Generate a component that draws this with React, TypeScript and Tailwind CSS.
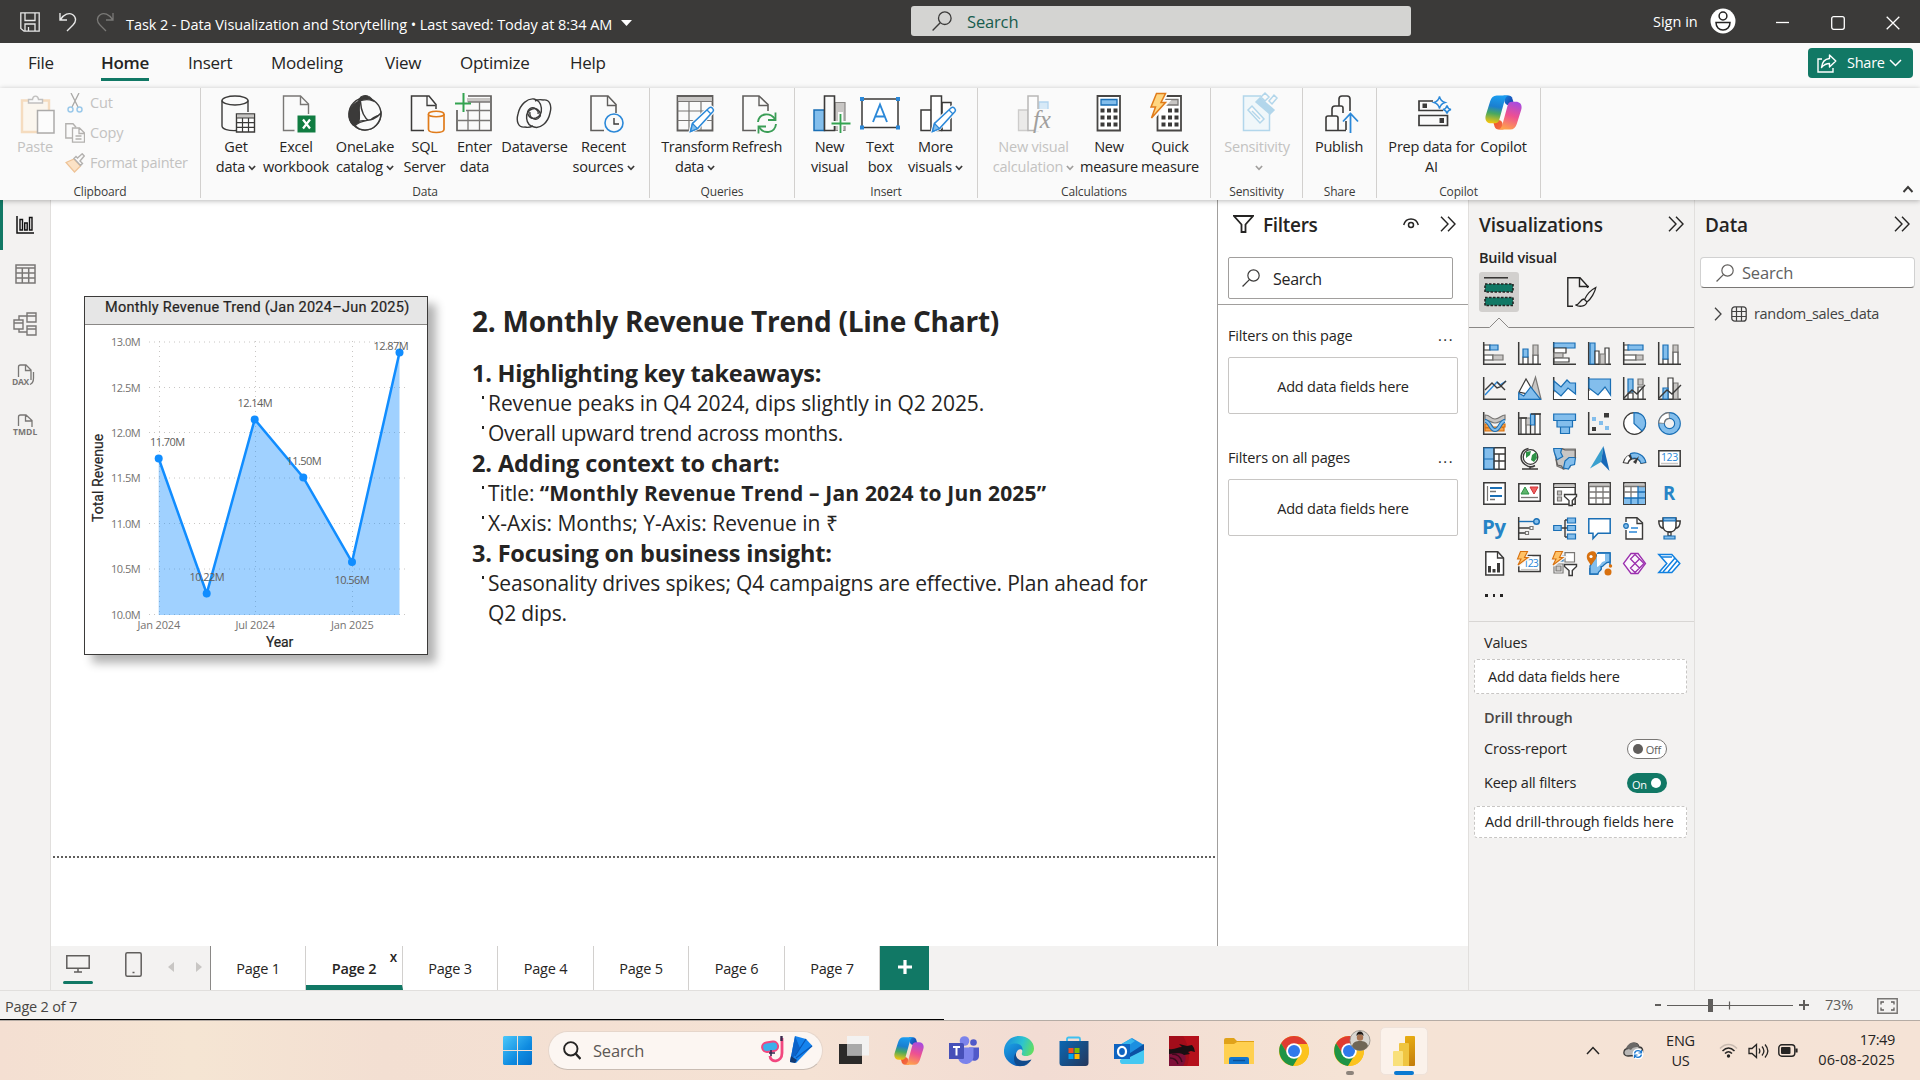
import type { ReactNode } from 'react';

const K = '#3b3a39';
const GF = '#c8c6c4';
const GS = '#797775';
const BF = '#83beec';
const BS = '#1a6fb5';

function Svg({ w, h, children, className = '' }: { w: number; h: number; children: ReactNode; className?: string }) {
  return (
    <svg width={w} height={h} viewBox={`0 0 ${w} ${h}`} fill="none" className={`shrink-0 ${className}`}>
      {children}
    </svg>
  );
}

/* ---------- shared glyphs ---------- */

function Down({ color = K }: { color?: string }) {
  return (
    <Svg w={8} h={6} className="ml-[3px] inline-block align-[1px]">
      <path d="M.9 1 4 4.3 7.1 1" stroke={color} strokeWidth="1.7" />
    </Svg>
  );
}

function DoubleChevron() {
  return (
    <Svg w={16} h={16}>
      <path d="M1 .8 8 8 1 15.2M8 .8 15 8 8 15.2" stroke="#252423" strokeWidth="1.4" />
    </Svg>
  );
}

function Magnifier({ color = K, size = 20 }: { color?: string; size?: number }) {
  return (
    <svg width={size} height={size} viewBox="0 0 20 20" fill="none" className="shrink-0">
      <circle cx="12.8" cy="7.2" r="6.3" stroke={color} strokeWidth="1.3" />
      <path d="M8.2 11.8.6 19.4" stroke={color} strokeWidth="1.4" />
    </svg>
  );
}

function CopilotLogo({ size }: { size: number }) {
  return (
    <svg width={size} height={size} viewBox="0 0 24 24" fill="none" className="shrink-0">
      <defs>
        <linearGradient id="cpA" x1="8" y1="1" x2="5" y2="19" gradientUnits="userSpaceOnUse">
          <stop stopColor="#1a9df0" />
          <stop offset=".4" stopColor="#1b7fd0" />
          <stop offset=".65" stopColor="#48a860" />
          <stop offset="1" stopColor="#f6c50e" />
        </linearGradient>
        <linearGradient id="cpB" x1="20" y1="5" x2="14" y2="23" gradientUnits="userSpaceOnUse">
          <stop stopColor="#a54be2" />
          <stop offset=".5" stopColor="#ee5092" />
          <stop offset="1" stopColor="#ffa24c" />
        </linearGradient>
        <linearGradient id="cpC" x1="12" y1="1" x2="19" y2="6" gradientUnits="userSpaceOnUse">
          <stop stopColor="#1688e0" />
          <stop offset="1" stopColor="#1839a8" />
        </linearGradient>
        <linearGradient id="cpD" x1="6" y1="18" x2="12" y2="23" gradientUnits="userSpaceOnUse">
          <stop stopColor="#f0542c" />
          <stop offset="1" stopColor="#f4744a" />
        </linearGradient>
      </defs>
      <path d="M12 1h3.200c1.300 0 2.200.8 2.600 2l1.200 4.200h-3.500c-1.500 0-2.400-.7-2.800-2z" fill="url(#cpC)" />
      <path d="M12 23H8.800c-1.300 0-2.200-.8-2.600-2L5 16.800h3.500c1.500 0 2.400.7 2.800 2z" fill="url(#cpD)" />
      <path d="M15.600 1H7.600C5.400 1 4.100 2.400 3.400 4.600L.6 13.400C-.4 16.600.9 19 4 19h2.600c1.300 0 2.200-.8 2.600-2L12.600 4.600C13.200 2.400 14 1.200 15.600 1Z" fill="url(#cpA)" />
      <path d="M8.400 23h8c2.200 0 3.500-1.400 4.200-3.600l2.800-8.800C24.400 7.400 23.100 5 20 5h-2.600c-1.300 0-2.200.8-2.600 2l-3.400 12.400c-.6 2.200-1.400 3.400-3 3.600Z" fill="url(#cpB)" />
    </svg>
  );
}

/* ---------- ribbon icons, 40 x 40 ---------- */

function R({ children, dx = 0 }: { children: ReactNode; dx?: number }) {
  return (
    <svg width="40" height="40" viewBox={`${-dx} 0 40 40`} fill="none" className="shrink-0 overflow-visible">
      {children}
    </svg>
  );
}

const pencil = (
  <g>
    <path d="M11 38 13.500 29 30 13.500C32 11.500 36 15 34.500 17.500L18.500 34.500Z" fill="#fafafa" stroke="#fafafa" strokeWidth="3" />
    <path d="M11.500 37.500 13.500 29.500 30 14C32.500 12 35.500 15.500 34 17.500L18.500 34.500Z" fill="#fff" stroke="#2b88d8" strokeWidth="1.500" />
    <path d="M11.500 37.500 13.500 29.500 18.500 34.500Z" fill={BF} stroke="#2b88d8" strokeWidth="1.200" />
    <path d="M28 16l4 4" stroke="#2b88d8" strokeWidth="1.200" />
  </g>
);

const icons: Record<string, ReactNode> = {
  paste: (
    <R dx={1}>
      <g opacity=".5">
        <path d="M6 6.500h27V38H6z" fill="#fdf3e3" stroke="#f1bf86" strokeWidth="2.400" />
        <path d="M12.500 9V5.500h4C17 1 22 1 22.500 5.500h4V9Z" fill="#fafafa" stroke="#8a8886" strokeWidth="1.400" />
        <path d="M21.500 16.500h16.500V39H21.500z" fill="#fff" stroke="#605e5c" strokeWidth="1.500" />
      </g>
    </R>
  ),
  get: (
    <R dx={3.5}>
      <path d="M2.500 6.500V32C2.500 35 9 37 17 36.500M28.500 6.500V18" stroke={K} strokeWidth="1.400" />
      <ellipse cx="15.500" cy="6.500" rx="13" ry="4.500" fill="#fafafa" stroke={K} strokeWidth="1.400" />
      <path d="M17 20h18v18H17z" fill="#fff" stroke={K} strokeWidth="1.400" />
      <path d="M17.500 20.500h17v3.500h-17z" fill="#c8c6c4" />
      <path d="M17 24h18M17 28.700h18M17 33.300h18M23 24v14M29 24v14" stroke={K} strokeWidth="1.200" />
    </R>
  ),
  excel: (
    <R dx={3.5}>
      <path d="M15 36.500H4V2H21L29 10V20" stroke="#797775" strokeWidth="1.400" />
      <path d="M21 2v8.500h8" stroke="#797775" strokeWidth="1.400" />
      <path d="M18 21.500h18V38.500H18z" fill="#107c41" />
      <path d="M23.500 25.500 30.500 34.500M30.500 25.500 23.500 34.500" stroke="#fff" strokeWidth="2.200" />
    </R>
  ),
  onelake: (
    <R>
      <circle cx="20" cy="20" r="16" fill="#fafafa" stroke={K} strokeWidth="1.400" />
      <path d="M13.500 7.500C14.500 3 18 1.500 20.500 1.500S26.500 3.500 28 7C23 4.500 18 5.500 13.500 7.500Z" fill={K} stroke={K} strokeWidth="1.200" />
      <path d="M12 8C2 14 2 25 8 31C13 33 15 27 14.500 20C14 15 14 11 15.500 7Z" fill={K} stroke={K} strokeWidth="1.200" />
      <path d="M15.500 8C16 16 19 24 25 28M25 28C20 26 12 26 8 31M25 28C26 24 31 22 36 21" stroke={K} strokeWidth="1.500" />
      <path d="M10 31.500C15 26.500 22 27 28 25 32 23 34.500 21 36 19 36 28 29 36 20 36 15 36 12 34 10 31.500Z" fill="#fafafa" stroke={K} strokeWidth="1.400" />
    </R>
  ),
  sql: (
    <R dx={1}>
      <path d="M18 36.500H5.500V2H23L30 10.500V15" stroke={K} strokeWidth="1.500" />
      <path d="M21 2v9.500h8.500" stroke={K} strokeWidth="1.300" />
      <path d="M22.500 20V35.500C23 39.500 37.500 39.500 38 35.500V20" fill="#fafafa" stroke="#e07b1a" strokeWidth="1.700" />
      <ellipse cx="30.200" cy="20" rx="7.800" ry="2.800" fill="#fafafa" stroke="#e07b1a" strokeWidth="1.500" />
    </R>
  ),
  enter: (
    <R dx={-1}>
      <path d="M3 16V36.500H37V2H14" stroke="#605e5c" strokeWidth="1.700" />
      <path d="M13 4h23v4H13z" fill="#c8c6c4" />
      <path d="M3 26.500H37M12 16.500H37M14 8H37M14 16v20M25.500 8v28" stroke="#797775" strokeWidth="1.300" />
      <path d="M1 9.500H17M9.500-1V18" stroke="#33a350" strokeWidth="2" />
    </R>
  ),
  dataverse: (
    <R dx={-1}>
      <path d="M11 33C4 34 2 27 4 20C6 10 14 4 20 5C29 7 30 21 22 24C15 26 11 18 16 14.500C20 12 25 16 24 20" stroke={K} strokeWidth="1.400" />
      <path d="M29 6C36 5 38 12 36 19C34 29 26 35 20 33C11 31 10 18 18 15C25 13 29 21 24 24.500C20 27 15 23 16 18" stroke={K} strokeWidth="1.400" />
      <path d="M11 33C15 34 17 33 19 32M29 6C25 5 23 6 21 7" stroke={K} strokeWidth="1.400" />
    </R>
  ),
  recent: (
    <R dx={2}>
      <path d="M18 36.500H5V2H22L30 10.500V19" stroke="#605e5c" strokeWidth="1.600" />
      <path d="M21.500 2v9.500h8.500" stroke="#605e5c" strokeWidth="1.400" />
      <circle cx="28" cy="29" r="9" fill="#fafafa" stroke="#2b88d8" strokeWidth="1.600" />
      <path d="M28 24v6h5" stroke={K} strokeWidth="1.400" />
    </R>
  ),
  transform: (
    <R>
      <path d="M2.500 2h35v34.500h-35z" fill="#fafafa" stroke="#605e5c" strokeWidth="1.800" />
      <path d="M3.500 3h33v4h-33z" fill="#c8c6c4" />
      <path d="M2.500 7.500h35M2.500 17h35M2.500 26.500h35M14 8v28M26 8v28" stroke="#797775" strokeWidth="1.200" />
      <g transform="translate(4 0)">{pencil}</g>
    </R>
  ),
  refresh: (
    <R dx={2}>
      <path d="M17 36.500H4V2H20L29 10.500V17" stroke="#605e5c" strokeWidth="1.600" />
      <path d="M20 2v9.500h9" stroke="#605e5c" strokeWidth="1.400" />
      <path d="M19 28C20 19 31 18 36 25M37 30C36 39 25 41 20 33" stroke="#3a9d56" strokeWidth="1.900" />
      <path d="M36.500 18.500V26H29M19.500 39.500V32.500H27" stroke="#3a9d56" strokeWidth="1.800" />
    </R>
  ),
  newvisual: (
    <R dx={1}>
      <path d="M3 16h10.500v20.500H3z" fill={BF} stroke={BS} strokeWidth="1.500" />
      <path d="M24 8.500h10V36.500H24z" fill="#c8c6c4" stroke="#8a8886" strokeWidth="1.200" />
      <path d="M13.500 2h10v34.500h-10z" fill="#fafafa" stroke={K} strokeWidth="1.600" />
      <path d="M29.500 18v20M20 29.500h19" stroke="#fafafa" strokeWidth="5" />
      <path d="M29.500 20v19M20.500 29.500h19" stroke="#33a350" strokeWidth="1.800" />
    </R>
  ),
  textbox: (
    <R>
      <path d="M2 5h36v28.500H2z" fill="#fff" stroke={K} strokeWidth="1.500" />
      <path d="M0 3h4v4H0zM36 3h4v4h-4zM0 31.500h4v4H0zM36 31.500h4v4h-4z" fill="#2b88d8" />
      <path d="M13 28 20 10.500 27 28M15.500 22.500h9" stroke="#2b88d8" strokeWidth="1.900" />
    </R>
  ),
  morevisual: (
    <R dx={1}>
      <path d="M4 16h10.500v20.500H4zM25 8.500h9V36.500h-9z" fill="#fff" stroke={K} strokeWidth="1.500" />
      <path d="M14 2h10.500v34.500H14z" fill="#fff" stroke={K} strokeWidth="1.500" />
      <g transform="translate(4 0)">{pencil}</g>
    </R>
  ),
  newcalc: (
    <R dx={1}>
      <g opacity=".5">
        <path d="M3.500 16H13v20.500H3.500z" fill="#dddbd9" stroke="#a19f9d" strokeWidth="1.300" />
        <path d="M24 8h9v9h-9z" fill="#b5d9f5" stroke="#6fb1e6" strokeWidth="1.300" />
        <path d="M13 2h10v34.500H13z" fill="#fff" stroke="#797775" strokeWidth="1.500" />
        <path d="M20 15h14v22H20z" fill="#fafafa" />
      </g>
      <text x="18" y="34" fontFamily="Liberation Serif, serif" fontStyle="italic" fontSize="25" fill="#a19f9d">fx</text>
    </R>
  ),
  calc: (
    <R dx={0}>
      <path d="M8.500 2h22.500v34.500H8.500z" fill="#fff" stroke="#484644" strokeWidth="1.800" />
      <path d="M12 5.500h16V11H12z" fill={BF} stroke={BS} strokeWidth="1.300" />
      <path d="M11.500 14.500h4v4h-4zM18 14.500h4v4h-4zM24.500 14.500h4v4h-4zM11.500 21.500h4v4h-4zM18 21.500h4v4h-4zM24.500 21.500h4v4h-4zM11.500 28.500h4v4h-4zM18 28.500h4v4h-4zM24.500 28.500h4v4h-4z" fill={K} />
    </R>
  ),
  quick: (
    <R>
      <path d="M7.500 2h23.500v34.500H7.500z" fill="#fff" stroke="#484644" strokeWidth="1.800" />
      <path d="M14 5.500h14V11H14z" fill="#c8c6c4" stroke="#797775" strokeWidth="1.300" />
      <path d="M11.500 21.500h4v4h-4zM18 14.500h4v4h-4zM24.500 14.500h4v4h-4zM18 21.500h4v4h-4zM24.500 21.500h4v4h-4zM11.500 28.500h4v4h-4zM18 28.500h4v4h-4zM24.500 28.500h4v4h-4z" fill={K} />
      <path d="M6-1h10l-4 9h5L2 25l4-12H.5Z" fill="#ffd27d" stroke="#fafafa" strokeWidth="4" />
      <path d="M6.500-.5h9L11 8.500h4.500L1.500 24 5.500 13H1Z" fill="#ffd680" stroke="#e07b1a" strokeWidth="1.500" />
    </R>
  ),
  sensitivity: (
    <R dx={2}>
      <g opacity=".75" stroke="#9bcbe6" strokeWidth="1.500">
        <path d="M22 2H4.500v34.500h26V18" fill="#edf6fb" />
        <path d="M9 16l4-4 12 13-4 4z" fill="#fafafa" />
        <path d="M13 17l8 8" />
        <path d="M17 8l4-4 14 12-4 4z" fill="#9bcbe6" />
        <path d="M22 3l4-4 4 4-4 4zM30 7l5-6 3 3-5 6z" fill="#fafafa" />
      </g>
    </R>
  ),
  publish: (
    <R dx={1}>
      <path d="M19 36.500H6V24a2 2 0 0 1 2-2h8a2 2 0 0 1 2 2V36M12 21.500V15a3 3 0 0 1 3-3h6a2 2 0 0 1 2 2v5M19 11.500V5a3 3 0 0 1 3-3h5a3 3 0 0 1 3 3v12M18 36.500h8M26 36V27" stroke={K} strokeWidth="1.600" />
      <path d="M30.500 39V20M23 27.500l7.500-8 7.500 8" stroke="#2b88d8" strokeWidth="1.800" />
    </R>
  ),
  prep: (
    <R dx={1}>
      <path d="M20 7H6v9.500h24M6 21.500h28.500V31.500H6z" stroke={K} strokeWidth="1.700" />
      <path d="M9.500 9.500h4.500v4.500H9.500zM26.500 24h4.500v5h-4.500z" fill={K} />
      <path d="M26.500 2.500C27.300 6 28.500 7.500 32 8.500 28.500 9.500 27.300 11 26.500 14.500 25.700 11 24.500 9.500 21 8.500 24.500 7.500 25.700 6 26.500 2.500ZM34 11.500C34.500 14 35.500 15 38 15.500 35.500 16 34.500 17 34 19.500 33.500 17 32.500 16 30 15.500 32.500 15 33.500 14 34 11.500Z" stroke="#2b88d8" strokeWidth="1.400" />
    </R>
  ),
  copilot: (
    <div className="flex h-10 w-10 items-center justify-center pb-[3px]">
      <CopilotLogo size={37} />
    </div>
  ),
};

function RBtn({ icon, w, a, b, arrow, off }: { icon: string; w: string; a: string; b?: string; arrow?: boolean; off?: boolean }) {
  return (
    <div className={`flex shrink-0 flex-col items-center ${w} ${off ? 'text-[#c3c2c1]' : 'text-[#252423]'}`}>
      {icons[icon]}
      <div className="mt-[3px] text-center leading-5 whitespace-nowrap">
        {a}
        <br />
        {b}
        {arrow && <Down color={off ? '#a19f9d' : K} />}
      </div>
    </div>
  );
}

function Group({ w, label, pl = '', children }: { w: string; label: string; pl?: string; children: ReactNode }) {
  return (
    <div className={`flex h-[110px] shrink-0 flex-col border-r border-[#d2d0ce] ${w}`}>
      <div className={`flex h-[95px] shrink-0 pt-[6px] ${pl}`}>{children}</div>
      <div className="h-[15px] text-center text-[12px] leading-[17px] tracking-[-0.15px] text-[#3b3a39]">{label}</div>
    </div>
  );
}

function TitleBar() {
  return (
    <div className="flex h-[43px] shrink-0 items-start bg-[#3b3a39] text-white">
      <Svg w={20} h={20} className="mt-[12px] ml-[20px]">
        <path d="M.8.8h18.400v18.400H4L.8 16.500zM5 1v7.500h10V1M5 19v-7h10v7M8.500 19v-4" stroke="#e8e8e8" strokeWidth="1.300" />
      </Svg>
      <Svg w={18} h={20} className="mt-[12px] ml-[19px]">
        <path d="M1 1v7h7M1.500 7.500C5 2 10 .5 13.500 2.500 18 5.500 17 10 14 13L8 19" stroke="#e8e8e8" strokeWidth="1.400" />
      </Svg>
      <Svg w={18} h={20} className="mt-[12px] ml-[19px]">
        <path d="M17 1v7h-7M16.500 7.500C13 2 8 .5 4.500 2.500 0 5.500 1 10 4 13L10 19" stroke="#7a7977" strokeWidth="1.300" />
      </Svg>
      <span className="mt-[15px] ml-[12px] w-[495px] leading-5 tracking-[-0.08px] whitespace-nowrap">
        Task 2 - Data Visualization and Storytelling • Last saved: Today at 8:34 AM
      </span>
      <Svg w={11} h={6} className="mt-[20px]">
        <path d="M0 0h11L5.500 6z" fill="#fff" />
      </Svg>
      <div className="mt-[6px] ml-[279px] flex h-[30px] w-[500px] items-center rounded-[3px] bg-[#d4d4d2] pl-[21px]">
        <Magnifier />
        <span className="mt-[2px] ml-[15px] text-[16.500px] tracking-[-0.15px] text-[#185c4d]">Search</span>
      </div>
      <span className="mt-[12px] ml-[242px] leading-5 tracking-normal">Sign in</span>
      <Svg w={26} h={26} className="mt-[8px] ml-[12px]">
        <circle cx="13" cy="13" r="12.500" fill="#fff" />
        <circle cx="13" cy="8" r="3.900" stroke="#252423" strokeWidth="1.500" />
        <path d="M6 14.500h14c0 4.500-3 7.500-7 7.500s-7-3-7-7.500Z" stroke="#252423" strokeWidth="1.500" />
      </Svg>
      <Svg w={13} h={14} className="mt-[15px] ml-[40px]">
        <path d="M0 7.500h13" stroke="#fff" strokeWidth="1.300" />
      </Svg>
      <Svg w={14} h={14} className="mt-[16px] ml-[42px]">
        <rect x=".7" y=".7" width="12.600" height="12.600" rx="2" stroke="#fff" strokeWidth="1.300" />
      </Svg>
      <Svg w={14} h={14} className="mt-[16px] ml-[41px]">
        <path d="M.7.7l12.600 12.600M13.300.7.7 13.300" stroke="#fff" strokeWidth="1.300" />
      </Svg>
    </div>
  );
}

function MenuBar() {
  const items: [string, string][] = [
    ['File', 'w-[73px]'],
    ['Home', 'w-[87px]'],
    ['Insert', 'w-[83px]'],
    ['Modeling', 'w-[114px]'],
    ['View', 'w-[75px]'],
    ['Optimize', 'w-[110px]'],
    ['Help', 'w-[60px]'],
  ];
  return (
    <div className="flex h-[45px] shrink-0 justify-between bg-[#fafafa] pl-[28px] text-[17px] tracking-[-0.25px] text-[#252423]">
      <div className="flex">
        {items.map(([t, w]) => (
          <div key={t} className={w}>
            <span
              className={`inline-block h-[38px] pt-[8px] leading-6 ${t === 'Home' ? 'border-b-3 border-[#117865] font-semibold tracking-[-0.3px]' : ''}`}
            >
              {t}
            </span>
          </div>
        ))}
      </div>
      <div className="mt-[5px] mr-[7px] flex h-[30px] w-[105px] items-center rounded-[4px] bg-[#117865] pl-[9px] text-[14.500px] text-white">
        <Svg w={20} h={19}>
          <path d="M5 5H1v13h15v-4" stroke="#fff" strokeWidth="1.400" />
          <path d="M12.500 1 18.800 7l-6.300 6V9.500C9 9.500 7 10.500 4.500 13.500 5 8.500 7.500 5 12.500 4.500Z" stroke="#fff" strokeWidth="1.400" strokeLinejoin="round" />
        </Svg>
        <span className="ml-[10px]">Share</span>
        <Svg w={13} h={8} className="ml-[4px]">
          <path d="M1 1l5.500 5.500L12 1" stroke="#fff" strokeWidth="1.500" />
        </Svg>
      </div>
    </div>
  );
}

function Ribbon() {
  return (
    <div className="relative z-10 flex h-[112px] shrink-0 bg-[#fafafa] shadow-[0_1px_5px_rgba(0,0,0,0.28)]">
      <Group w="w-[201px]" label="Clipboard" pl="pl-[14px]">
        <RBtn icon="paste" w="w-[42px]" a="Paste" off />
        <div className="mt-[-6px] ml-[9px] flex flex-col text-[#c3c2c1]">
          <div className="flex h-[30px] items-center">
            <Svg w={20} h={20}>
              <path d="M6 0l7 14M14 0 7 14" stroke="#a9a8a6" strokeWidth="1.300" />
              <circle cx="5.500" cy="16.500" r="2.500" stroke="#9bc9ea" strokeWidth="1.500" />
              <circle cx="14.500" cy="16.500" r="2.500" stroke="#9bc9ea" strokeWidth="1.500" />
            </Svg>
            <span className="ml-[5px]">Cut</span>
          </div>
          <div className="flex h-[30px] items-center">
            <Svg w={20} h={20}>
              <path d="M7 15H.8V.8H8l3 3.500" stroke="#b3b1af" strokeWidth="1.400" />
              <path d="M7.500 5h7l5 5v9.200h-12zM14 5v5.500h5.500M10.500 13h6M10.500 16h6" stroke="#b3b1af" strokeWidth="1.300" />
            </Svg>
            <span className="ml-[5px]">Copy</span>
          </div>
          <div className="flex h-[30px] items-center">
            <Svg w={20} h={20}>
              <path d="M1 9.500 9 6l6.500 7L9.500 19Z" fill="#fbe2c6" stroke="#eec397" strokeWidth="1.300" />
              <path d="M9 5.500l6.500 7 2-2L15 8l4.200-5-2-2.200L12.500 5 11 3.500Z" fill="#fafafa" stroke="#b3b1af" strokeWidth="1.400" />
            </Svg>
            <span className="ml-[5px] tracking-[-0.25px]">Format painter</span>
          </div>
        </div>
      </Group>
      <Group w="w-[449px]" label="Data" pl="pl-[5px]">
        <RBtn icon="get" w="w-[60px]" a="Get" b="data" arrow />
        <RBtn icon="excel" w="w-[60px]" a="Excel" b="workbook" />
        <RBtn icon="onelake" w="w-[78px]" a="OneLake" b="catalog" arrow />
        <RBtn icon="sql" w="w-[41px]" a="SQL" b="Server" />
        <RBtn icon="enter" w="w-[59px]" a="Enter" b="data" />
        <RBtn icon="dataverse" w="w-[61px]" a="Dataverse" />
        <RBtn icon="recent" w="w-[77px]" a="Recent" b="sources" arrow />
      </Group>
      <Group w="w-[145px]" label="Queries" pl="pl-[9px]">
        <RBtn icon="transform" w="w-[72px] tracking-[-0.35px]" a="Transform" b="data" arrow />
        <RBtn icon="refresh" w="w-[52px]" a="Refresh" />
      </Group>
      <Group w="w-[183px]" label="Insert" pl="pl-[9px]">
        <RBtn icon="newvisual" w="w-[51px]" a="New" b="visual" />
        <RBtn icon="textbox" w="w-[50px]" a="Text" b="box" />
        <RBtn icon="morevisual" w="w-[61px]" a="More" b="visuals" arrow />
      </Group>
      <Group w="w-[233px]" label="Calculations" pl="pl-[15px]">
        <RBtn icon="newcalc" w="w-[81px]" a="New visual" b="calculation" arrow off />
        <RBtn icon="calc" w="w-[70px]" a="New" b="measure" />
        <RBtn icon="quick" w="w-[52px]" a="Quick" b="measure" />
      </Group>
      <Group w="w-[92px]" label="Sensitivity" pl="pl-[11px]">
        <RBtn icon="sensitivity" w="w-[70px]" a="Sensitivity" b="" arrow off />
      </Group>
      <Group w="w-[74px]" label="Share" pl="pl-[6px]">
        <RBtn icon="publish" w="w-[60px]" a="Publish" />
      </Group>
      <Group w="w-[164px]" label="Copilot" pl="pl-[9px]">
        <RBtn icon="prep" w="w-[91px]" a="Prep data for" b="AI" />
        <RBtn icon="copilot" w="w-[53px]" a="Copilot" />
      </Group>
      <Svg w={12} h={8} className="mt-[97px] ml-auto mr-[6px]">
        <path d="M1.500 7 6 2l4.500 5" stroke={K} strokeWidth="1.900" />
      </Svg>
    </div>
  );
}

function NavRail() {
  return (
    <div className="flex w-[51px] shrink-0 flex-col items-center border-r border-[#e1dfdd] bg-[#f3f2f1]">
      <div className="flex h-[50px] w-full items-center justify-center border-l-3 border-[#117865] pr-[3px]">
        <Svg w={18} h={18}>
          <path d="M1 0v17h17" stroke="#111" strokeWidth="1.500" />
          <path d="M4 3.500h2.500V14H4zM8.700 7h2.500v7H8.700zM13.500 1.500H16V14h-2.500z" stroke="#111" strokeWidth="1.400" />
        </Svg>
      </div>
      <div className="flex h-[48px] items-center">
        <Svg w={21} h={20}>
          <path d="M1 1h19v18H1zM1 4h19M1 9h19M1 14h19M7.300 4v15M13.700 4v15" stroke="#797775" strokeWidth="1.500" />
        </Svg>
      </div>
      <div className="flex h-[52px] items-center">
        <Svg w={24} h={24}>
          <path d="M1 8h9v9H1zM14 1h9v9h-9zM14 14h9v9h-9zM1 11h9M14 4h9M14 17h9M6 8V4h8M6 17v3h8" stroke="#797775" strokeWidth="1.400" />
        </Svg>
      </div>
      <div className="flex h-[50px] items-center pr-[2px]">
        <Svg w={24} h={22} className="overflow-visible">
          <path d="M6.500 13V3a2 2 0 0 1 2-2H14l5 5v10M13.500 1v5.500H19M21.500 8v6c0 4-1 5.500-3.500 6.500" stroke="#797775" strokeWidth="1.300" />
          <text x="0" y="20.500" fontSize="8.500" fontWeight="700" fill="#797775" textLength="17" fontFamily="Open Sans, sans-serif">DAX</text>
        </Svg>
      </div>
      <div className="flex h-[50px] items-center">
        <Svg w={24} h={22} className="overflow-visible">
          <path d="M5.500 12V3a2 2 0 0 1 2-2H13l6 5.500V13M12.500 1v6H19" stroke="#797775" strokeWidth="1.300" />
          <text x="0" y="21" fontSize="8.500" fontWeight="700" fill="#797775" textLength="24" fontFamily="Open Sans, sans-serif">TMDL</text>
        </Svg>
      </div>
    </div>
  );
}

/* ---------- report canvas ---------- */

const points: [number, number, string, number, number][] = [
  [74.7, 162.5, '11.70M', 66, 150],
  [122.7, 297.5, '10.22M', 105.5, 285],
  [170.7, 123.5, '12.14M', 153.5, 111],
  [219.3, 181.5, '11.50M', 202.5, 169],
  [268, 266, '10.56M', 250.5, 288],
  [315.5, 56.5, '12.87M', 289.5, 54],
];

function ChartCard() {
  const line = points.map(([x, y]) => `${x},${y}`).join(' ');
  return (
    <div className="mt-[96px] ml-[33px] h-[359px] w-[344px] shrink-0 border border-[#3b3a39] bg-white shadow-[8px_8px_9px_rgba(0,0,0,0.3)]">
      <svg width="342" height="357" viewBox="1 1 342 357" fill="none" fontFamily="Open Sans, sans-serif">
        <rect x="1" y="1" width="342" height="27" fill="#e6e6e6" />
        <path d="M1 28.500H343" stroke="#8a8886" />
        <text x="21" y="16" fontFamily="Roboto, sans-serif" fontSize="14.500" fill="#252423" stroke="#252423" strokeWidth=".2" textLength="304">
          Monthly Revenue Trend (Jan 2024–Jun 2025)
        </text>
        {[46, 91.5, 136.5, 182, 227.5, 273, 318.5].map((y, i) => (
          <g key={y}>
            <path d={`M65 ${y}H322`} stroke="#c8c6c4" strokeDasharray="1 4" />
            <text x="27" y={y + 4} fontSize="11" fill="#757371" textLength="29.500">
              {(13 - i * 0.5).toFixed(1)}M
            </text>
          </g>
        ))}
        {[75.5, 171.5, 268.5].map((x) => (
          <path key={x} d={`M${x} 45V319`} stroke="#c8c6c4" strokeDasharray="1 4" />
        ))}
        <polygon points={`${line} 315.5,319 74.7,319`} fill="#118dff" fillOpacity=".4" />
        <polyline points={line} stroke="#118dff" strokeWidth="2.500" />
        {points.map(([x, y]) => (
          <circle key={x} cx={x} cy={y} r="4" fill="#118dff" />
        ))}
        {points.map(([, , t, x, y]) => (
          <text key={t} x={x} y={y} fontSize="11" fill="#605e5c" textLength="35">
            {t}
          </text>
        ))}
        <g fontSize="11" fill="#757371">
          <text x="53.500" y="333" textLength="42.500">Jan 2024</text>
          <text x="151.500" y="333" textLength="39">Jul 2024</text>
          <text x="247" y="333" textLength="42.500">Jan 2025</text>
        </g>
        <g fontFamily="Roboto, sans-serif" fontSize="14" fill="#252423" stroke="#252423" strokeWidth=".2">
          <text x="182" y="351" textLength="27">Year</text>
          <text transform="translate(19 226) rotate(-90)" textLength="88">Total Revenue</text>
        </g>
      </svg>
    </div>
  );
}

function Bullet({ children, track = 'tracking-[-0.15px]' }: { children: ReactNode; track?: string }) {
  return (
    <div className="flex">
      <span className="mt-[7px] mr-[4px] ml-[10px] h-[3px] w-[2px] shrink-0 bg-[#252423]" />
      <p className={`text-[21px] leading-[29.500px] whitespace-nowrap ${track}`}>{children}</p>
    </div>
  );
}

function Head({ children, track }: { children: ReactNode; track: string }) {
  return <h3 className={`text-[23.500px] leading-[31px] font-bold ${track}`}>{children}</h3>;
}

function Canvas() {
  return (
    <div className="flex w-[1167px] shrink-0 flex-col border-r border-[#a19f9d] bg-white">
      <div className="flex h-[656px]">
        <ChartCard />
        <div className="mt-[101px] ml-[44px] text-[#252423]">
          <h2 className="mb-[17px] text-[28px] leading-10 font-bold tracking-[-0.25px] whitespace-nowrap">
            2. Monthly Revenue Trend (Line Chart)
          </h2>
          <Head track="tracking-[-0.24px]">1. Highlighting key takeaways:</Head>
          <Bullet track="tracking-[-0.08px]">Revenue peaks in Q4 2024, dips slightly in Q2 2025.</Bullet>
          <Bullet track="tracking-[-0.25px]">Overall upward trend across months.</Bullet>
          <Head track="tracking-[-0.1px]">2. Adding context to chart:</Head>
          <Bullet track="tracking-[-0.1px]">
            Title: <b className="tracking-[0.17px]">“Monthly Revenue Trend – Jan 2024 to Jun 2025”</b>
          </Bullet>
          <Bullet track="tracking-[0px]">X-Axis: Months; Y-Axis: Revenue in ₹</Bullet>
          <Head track="tracking-[-0.2px]">3. Focusing on business insight:</Head>
          <Bullet track="tracking-[-0.17px]">
            Seasonality drives spikes; Q4 campaigns are effective. Plan ahead for
            <br />
            Q2 dips.
          </Bullet>
        </div>
      </div>
      <div className="mr-[2px] ml-[2px] h-0 border-t-2 border-dotted border-[#605e5c]" />
    </div>
  );
}

/* ---------- panes ---------- */

function FilterSection({ title, mt, boxMt }: { title: string; mt: string; boxMt: string }) {
  return (
    <div className={mt}>
      <div className="flex justify-between pr-[14px]">
        <span className="leading-5 tracking-[-0.15px]">{title}</span>
        <span className="leading-5 tracking-[1.500px]">...</span>
      </div>
      <div className={`flex h-[57px] w-[230px] items-center justify-center rounded-[2px] border border-[#c8c6c4] pt-[2px] ${boxMt}`}>
        Add data fields here
      </div>
    </div>
  );
}

function Filters() {
  return (
    <div className="w-[250px] shrink-0 bg-white">
      <div className="h-[105px] border-b border-[#a19f9d] pl-[10px]">
        <div className="flex h-[57px] items-start">
          <Svg w={21} h={18} className="mt-[15px] ml-[5px]">
            <path d="M1 1h19l-7.500 8.500V17H8.500V9.500Z" stroke="#252423" strokeWidth="1.800" />
          </Svg>
          <span className="mt-[13px] ml-[9px] w-[140px] text-[19px] leading-6 font-semibold tracking-[-0.3px]">Filters</span>
          <Svg w={16} h={11} className="mt-[18px]">
            <path d="M.7 7C3 -1 13 -1 15.300 7" stroke="#252423" strokeWidth="1.500" />
            <circle cx="8" cy="7" r="2.500" stroke="#252423" strokeWidth="1.500" />
          </Svg>
          <div className="mt-[16px] ml-[21px]">
            <DoubleChevron />
          </div>
        </div>
        <div className="flex h-[42px] w-[225px] items-center rounded-[2px] border border-[#a19f9d] pl-[13px]">
          <Magnifier size={18} />
          <span className="mt-[1px] ml-[13px] text-[16px] tracking-[-0.3px]">Search</span>
        </div>
      </div>
      <div className="pl-[10px]">
        <FilterSection title="Filters on this page" mt="mt-[21px]" boxMt="mt-[11px]" />
        <FilterSection title="Filters on all pages" mt="mt-[34px]" boxMt="mt-[11px]" />
      </div>
    </div>
  );
}

const axis = <path d="M.7 0v22.300H23" stroke={K} strokeWidth="1.500" />;
const bolt = (
  <g>
    <path d="M2-1h8L7 5.500h3.500L0 13.500 3 7H-1Z" stroke="#f3f2f1" strokeWidth="3" fill="#f3f2f1" />
    <path d="M2.500-.5H9.500L6.500 5.500H10L0 13 3 7H-.5Z" fill="#ffc266" stroke="#d8710f" strokeWidth="1.100" />
  </g>
);
const funnelSmall = <path d="M11.500 12.500h12v2l-4.200 4v5h-3.300v-5l-4.500-4z" fill="#fff" stroke={K} strokeWidth="1.400" />;
const s = (fill: string, stroke: string, d: string) => <path d={d} fill={fill} stroke={stroke} strokeWidth="1.200" />;

const viz: ReactNode[] = [
  <>{axis}{s('#fff', K, 'M1 3h6v5H1zM1 13h9v5H1z')}{s(BF, BS, 'M7 3h8v5H7z')}{s(GF, GS, 'M10 13h10v5H10z')}</>,
  <>{axis}{s('#fff', K, 'M5 15h5v7H5zM15 13h5v9h-5z')}{s(BF, BS, 'M5 7h5v8H5z')}{s(GF, GS, 'M15 3h5v10h-5z')}</>,
  <>{axis}{s(BF, BS, 'M1 1h21v5H1z')}{s('#fff', K, 'M1 6h12v5H1zM1 16h15v4H1z')}{s(GF, GS, 'M1 11h9v4.500H1z')}</>,
  <>{axis}{s(BF, BS, 'M2 1h5v21H2z')}{s('#fff', K, 'M7 9h4v13H7zM17 6h4v16h-4z')}{s(GF, GS, 'M12 12h5v10h-5z')}</>,
  <>{axis}{s('#fff', K, 'M1 3h5v5H1zM1 13h12v5H1z')}{s(BF, BS, 'M5 3h15v5H5z')}{s(GF, GS, 'M13 13h7v5h-7z')}</>,
  <>{axis}{s('#fff', K, 'M5 17h5v5H5zM15 10h5v12h-5z')}{s(BF, BS, 'M5 3h5v14H5z')}{s(GF, GS, 'M15 3h5v7h-5z')}</>,
  <>{axis}<path d="M2 18 14 5l3 3 6-4" stroke="#2b88d8" strokeWidth="1.400" /><path d="M2 13l7-7 5 5 3-1 6-6M14 5l8 8" stroke={K} strokeWidth="1.400" /></>,
  <>{s(GF, GS, 'M10 22 17.500 0 23 22z')}{s('#fff', K, 'M1 15 8 2l10 17z')}{s(BF, BS, 'M.7 22.500V16l5 3 7-9 9.800 12.500z')}<path d="M0 22.300h23" stroke={BS} strokeWidth="1.200" /></>,
  <>{axis}{s('#fff', 'none', 'M1 15l7 4 7-7 8 6v4H1z')}{s(BF, BS, 'M1 4l7 6 6-7 3 3h5.500v11L15 11l-7 8-7-6z')}</>,
  <>{axis}{s('#fff', 'none', 'M1 14h22v8H1z')}{s(BF, BS, 'M1 2h21.500v16L17 10l-7 8-9-7z')}</>,
  <>{axis}{s(BF, BS, 'M5 2h5v13H5z')}{s(GF, GS, 'M15 2h5v6h-5z')}{s('#fff', K, 'M5 16h5v6H5zM15 10h5v12h-5z')}<path d="M1 21l8-8 5 4 8-9" stroke={K} strokeWidth="1.400" /></>,
  <>{axis}{s(GF, GS, 'M15 6h5v16h-5z')}{s('#fff', K, 'M10 1h5v21h-5z')}{s(BF, BS, 'M5 11h5v11H5z')}<path d="M1 21l8-8 5 4 9-9" stroke={K} strokeWidth="1.400" /></>,
  <>{axis}{s('#f4a24c', '#d8710f', 'M2 12h6l2 3h5l2-3h5v3h-4l3 1v3H2v-3h5l-5-1z')}{s(GF, GS, 'M2 3c6 0 5 4 10 4s6-4 10-4v5c-4 0-6 3-10 3s-5-3-10-3z')}<path d="M2 9c5 0 5 9 10 9s5-9 10-9" stroke={BS} strokeWidth="4" /><path d="M2 9c5 0 5 9 10 9s5-9 10-9" stroke={BF} strokeWidth="2" /></>,
  <>{axis}{s('#fff', K, 'M3 6h5v16H3zM17 2h5v20h-5z')}{s(GF, GS, 'M8 6h5v7H8z')}{s(BF, BS, 'M12.500 2h4v11h-4z')}<path d="M12.500 13v9M1 6h8M13 2h10" stroke={K} strokeWidth="1.300" /></>,
  <>{s(BF, BS, 'M.7 2h21.800v6.500H.7zM4 8.500h15.500v6.500H4zM7.500 15h9v6.500h-9z')}</>,
  <>{axis}<path d="M4 5h4v4H4zM11 9h4v4h-4zM17 14h4v4h-4z" fill={BF} /><path d="M16 1h5v4.500h-5zM4 15h4v4H4z" fill={K} /></>,
  <><circle cx="11.500" cy="11.500" r="10.800" fill="#fff" stroke={K} strokeWidth="1.300" />{s(BF, BS, 'M11 .7C24 .5 25 14 19 19L11 11.500z')}</>,
  <><circle cx="11.500" cy="11.500" r="8" stroke={BS} strokeWidth="6.800" /><circle cx="11.500" cy="11.500" r="8" stroke={BF} strokeWidth="4.600" /><path d="M3.500 11.500A8 8 0 0 1 11.500 3.500" stroke={GS} strokeWidth="6.800" /><path d="M3.500 10.800A8 8 0 0 1 10.800 3.500" stroke="#fff" strokeWidth="4.600" /></>,
  <><path d="M.8.8h21.400v21.400H.8z" fill="#fff" stroke={K} strokeWidth="1.500" />{s(BF, BS, 'M1 1h10v11H1zM1 12h10v10H1z')}<path d="M11 7h11M16 7v15M11 14h11M11 1v21" stroke={K} strokeWidth="1.300" /></>,
  <><circle cx="12.500" cy="10" r="7.300" fill="#fff" stroke={K} strokeWidth="1.300" /><path d="M8 5l5-1-1 4-4 3zM14 8l4-3 1 6-3 4-3-2z" fill="#2d9346" /><path d="M10.500 1.500C2 3 1 13 7 17.500S16 19 17 18.500M12 19v3M4 22h16" stroke={K} strokeWidth="1.500" /></>,
  <>{s(GF, GS, 'M1 2h21.300v9L18 14l-1 6-6 2-7-3-1-7z')}{s(BF, BS, 'M.7 1.500h8l-1 4 2 4-6 3.500c0-4-3-6-3-11.500zM12 14l4-3.500h6.500l-1 7-4 1-2 3.500-5-1z')}<path d="M9 1.500l3 1.500h10.300v8M3 12l1.500 6 4 1 2 3.500" stroke="#605e5c" strokeWidth="1.200" /></>,
  <><path d="M15.500-1 2 21.500l11-6.500z" fill="#39a0cf" /><path d="M15.500-1 21.500 24 13 15z" fill="#1769b8" /></>,
  <><path d="M2.500 16.500a9.200 9.200 0 0 1 18 0" stroke={K} strokeWidth="6" /><path d="M2.700 15.500a9.200 9.200 0 0 1 3.500-5.500" stroke="#fff" strokeWidth="3.500" /><path d="M8 9a9.200 9.200 0 0 1 12.500 7" stroke={BS} strokeWidth="6" /><path d="M8.500 9a9.200 9.200 0 0 1 11.800 6.500" stroke={BF} strokeWidth="3.800" /><path d="M10 15l6-6-3 8z" fill={K} /></>,
  <><path d="M.8 3.800h21.400v15.400H.8z" fill="#fff" stroke={K} strokeWidth="1.500" /><text x="3" y="14" fontSize="10.500" fill="#2b88d8" textLength="17">123</text><path d="M3 16.500h17" stroke={GF} strokeWidth="1.500" /></>,
  <><path d="M.8.8h21.400v21.400H.8z" fill="#fff" stroke={K} strokeWidth="1.500" /><path d="M4.500 4v15" stroke={GS} strokeWidth="1.200" /><path d="M7 6h12M7 14h12" stroke={BS} strokeWidth="2" /><path d="M7 9.500h6M7 17.500h5" stroke={GS} strokeWidth="1.300" /></>,
  <><path d="M.8 1.800h21.400v17.400H.8z" fill="#fff" stroke={K} strokeWidth="1.500" /><path d="M3 12 7 5l4 7z" fill="#5fb56c" stroke="#2d9346" /><path d="M12 5h8l-4 7z" fill="#f0605f" stroke="#d13438" /><path d="M3 15.500h17" stroke={GS} strokeWidth="1.300" /></>,
  <><path d="M.8 1.800h21.400v20.400H.8z" fill="#fff" stroke={K} strokeWidth="1.500" /><path d="M1.500 2.500h20V5h-20z" fill={GF} /><path d="M1 5.500h21" stroke={K} />{s(GF, GS, 'M4.500 9h4v4h-4zM4.500 15h4v4h-4z')}{funnelSmall}</>,
  <><path d="M.8.8h21.400v21.400H.8z" fill="#fff" stroke={K} strokeWidth="1.500" /><path d="M1.500 1.500h20V4h-20z" fill={GF} /><path d="M1 4.500h21M1 10h21M1 16h21M8 4v18M15 4v18" stroke={GS} strokeWidth="1.300" /></>,
  <><path d="M.8.8h21.400v21.400H.8z" fill="#fff" stroke={K} strokeWidth="1.500" /><path d="M1.500 1.500h20V4h-20z" fill={GF} /><path d="M15 5h7v17H1v-6h14z" fill={BF} /><path d="M1 4.500h21M1 10h14M8 4v12" stroke={GS} strokeWidth="1.300" /><path d="M1 16h21M15 4v18M15 10h7M8 16v6" stroke={BS} strokeWidth="1.300" /></>,
  <><text x="5" y="18" fontSize="19" fontWeight="700" fill="#2684c6" textLength="12" lengthAdjust="spacingAndGlyphs">R</text></>,
  <><text x="-1" y="17" fontSize="19.500" fontWeight="700" fill="#2684c6" textLength="24" lengthAdjust="spacingAndGlyphs">Py</text></>,
  <>{axis}<path d="M1 4.500h16" stroke={BS} strokeWidth="1.400" /><circle cx="18.500" cy="4.500" r="2.800" fill={BF} stroke={BS} strokeWidth="1.400" /><path d="M1 11h11M1 16h6" stroke={K} strokeWidth="1.300" /><path d="M12 9.500h3v3h-3zM7.500 14.500h3v3h-3z" stroke={GS} strokeWidth="1.200" fill="#fff" /></>,
  <><path d="M8 11h4M12 3v17M12 3h3M12 11h3M12 20h3" stroke={K} strokeWidth="1.400" />{s(BF, BS, 'M.7 8.500h7.500v5H.7zM14.500 1h8v5h-8zM14.500 8.500h8v5h-8zM14.500 17h8v5h-8z')}</>,
  <><path d="M.8 1.800h21.400v14.400H10L5 21.500v-5.300H.8z" fill="#fff" stroke={BS} strokeWidth="1.500" /></>,
  <><path d="M3 5V.8h11l5.500 5V22H3v-9" fill="#fff" stroke={K} strokeWidth="1.400" /><path d="M14 1v5.500h5.500" stroke={K} strokeWidth="1.300" /><circle cx="3" cy="9" r="2.300" fill={BF} stroke={BS} strokeWidth="1.200" /><path d="M8 11h7M6 15h8" stroke="#2b88d8" strokeWidth="1.400" /></>,
  <><path d="M5 1h13v8c0 4-3 6-6.500 6S5 13 5 9zM5 4H.8c0 5 1.500 7 5 7.500M18 4h4.200c0 5-1.500 7-5 7.500" fill="#fff" stroke={K} strokeWidth="1.500" /><path d="M10 15h3v4h-3z" stroke={K} strokeWidth="1.300" />{s(BF, BS, 'M5.500.8h12v3h-12zM6 19h11v3H6z')}</>,
  <><path d="M2.800-.2h12L20.500 6v17H2.800z" fill="#fff" stroke={K} strokeWidth="1.500" /><path d="M14.500 0v6h6" stroke={K} strokeWidth="1.300" /><path d="M5 14h3v6.500H5zM9.500 17h3v3.500h-3zM14 11h3v9.500h-3z" fill={K} /></>,
  <><path d="M6 3.500h16.200v16H.8V12" fill="#fff" stroke={K} strokeWidth="1.500" /><text x="5" y="15" fontSize="10.500" fill="#2b88d8" textLength="15.500">123</text><path d="M3 17.500h17" stroke={GF} strokeWidth="1.200" />{bolt}</>,
  <>{s('#fff', GS, 'M12 .7h9.500V10H12zM1 12h9v9H1z')}{s(GF, GS, 'M3 14h5v5H3z')}{s(BF, BS, 'M5 4h5v5H5z')}{funnelSmall}{bolt}</>,
  <><path d="M10 1h12v12M10 22H2v-6" stroke={BS} strokeWidth="1.500" /><path d="M10 1h12v9c-6 0-5 4-9 5 2 4-3 3-3 7H2v-8z" fill={BF} stroke={BS} strokeWidth="1.300" /><path d="M9 2h8v7c-5 1-3 4-8 6z" fill="#fff" /><path d="M3-.5c6-2 7 6 3.500 9L3 13.500-.5 8C-2 4-1 .5 3-.5z" fill="#d8710f" /><circle cx="3" cy="4.500" r="1.600" fill="#fff" /><circle cx="20" cy="20" r="3.500" fill="#d8710f" /><circle cx="22.500" cy="14" r="1.700" fill="#d8710f" /></>,
  <><g stroke="#9b2fae" strokeWidth="1.300" fill="#fbf7fc"><path d="M8 1.500h7l7.500 10-7.500 10H8L.5 11.500z" /><path d="M12 2.500l4.500 4.500-4.500 4.500L7.500 7zM16.500 7l4.500 4.500-4.500 4.500-4.500-4.500zM12 11.500l4.500 4.500-4.500 4.500L7.500 16z" /></g></>,
  <><path d="M.8 2.500h13l8 9-8 9H.8l8-9z" stroke="#1080e0" strokeWidth="1.500" fill="#fff" /><path d="M5 20 17 6M10 20l9-11M3 5h11" stroke="#1080e0" strokeWidth="1.500" /></>,
];

function Toggle({ on }: { on?: boolean }) {
  return on ? (
    <div className="flex h-5 w-10 items-center justify-between rounded-full bg-[#117865] pr-[6px] pl-[5px] text-[11px] text-white">
      <span className="pt-[2px] leading-none">On</span>
      <span className="h-[10px] w-[10px] rounded-full bg-white" />
    </div>
  ) : (
    <div className="flex h-5 w-10 items-center justify-between rounded-full border border-[#797775] bg-white pr-[5px] pl-[5px] text-[11px] text-[#605e5c]">
      <span className="h-[10px] w-[10px] rounded-full bg-[#605e5c]" />
      <span className="pt-[1px] leading-none">Off</span>
    </div>
  );
}

function Visualizations() {
  return (
    <div className="flex w-[227px] shrink-0 flex-col border-x border-[#e1dfdd] bg-[#f3f2f1]">
      <div className="flex h-[49px] items-start justify-between pr-[10px] pl-[10px]">
        <span className="mt-[13px] text-[19px] leading-6 font-semibold tracking-[-0.15px]">Visualizations</span>
        <div className="mt-[16px]">
          <DoubleChevron />
        </div>
      </div>
      <span className="pl-[10px] leading-[17px] font-semibold">Build visual</span>
      <div className="mt-[6px] flex pl-[10px]">
        <div className="flex h-10 w-10 items-center justify-center rounded-[3px] bg-[#d2d0ce]">
          <Svg w={30} h={30}>
            <path d="M0 .8h24" stroke="#252423" strokeWidth="1.400" />
            <path d="M1 7h28v8H1zM1 20.500h28v8H1z" fill="#117865" stroke="#252423" strokeWidth="1.600" strokeDasharray="2.500 1.500" />
          </Svg>
        </div>
        <Svg w={30} h={30} className="mt-[5px] ml-[48px]">
          <path d="M6 29.300H.8V.8H13L20.500 9v2M12.500 1v8.500H22" stroke="#252423" strokeWidth="1.400" />
          <path d="M28.800 10.500c-4 2-9 7-11.300 12l2.500 2.500c4-3 8-10 8.800-14.500ZM17 22c-4 0-4 6-8.500 6 5 2.500 11 1 11.500-3.500" stroke="#252423" strokeWidth="1.300" fill="#f3f2f1" />
        </Svg>
      </div>
      <svg width="225" height="11" viewBox="0 0 225 11" fill="none" className="mt-[5px] shrink-0">
        <path d="M0 10.500H20.500L30 1l9.500 9.500H225" stroke="#8a8886" />
      </svg>
      <div className="mt-[14px] grid grid-cols-[repeat(6,35px)] grid-rows-[repeat(7,35px)] pl-[14px]">
        {viz.map((v, i) => (
          <svg key={i} width="23" height="23" viewBox="0 0 23 23" fill="none" className="overflow-visible" fontFamily="Open Sans, sans-serif">
            {v}
          </svg>
        ))}
      </div>
      <div className="mt-[6px] flex h-[29px] gap-[5px] border-b border-[#d8d6d4] pl-[16px]">
        <span className="mt-[1px] size-[2.500px] bg-[#252423]" />
        <span className="mt-[1px] size-[2.500px] bg-[#252423]" />
        <span className="mt-[1px] size-[2.500px] bg-[#252423]" />
      </div>
      <span className="mt-[11px] pl-[15px] leading-5">Values</span>
      <div className="mt-[6px] ml-[5px] flex h-[35px] w-[213px] items-center rounded-[3px] border border-dashed border-[#c8c6c4] bg-white pl-[13px]">
        Add data fields here
      </div>
      <span className="mt-[14px] pl-[15px] leading-5 font-semibold tracking-[-0.05px] text-[#484644]">Drill through</span>
      <div className="mt-[11px] flex h-5 items-center justify-between pr-[27px] pl-[15px]">
        Cross-report
        <Toggle />
      </div>
      <div className="mt-[14px] flex h-5 items-center justify-between pr-[27px] pl-[15px]">
        Keep all filters
        <Toggle on />
      </div>
      <div className="mt-[13px] ml-[5px] flex h-[32px] w-[213px] items-center rounded-[3px] border border-dashed border-[#c8c6c4] bg-white pl-[10px] tracking-[-0.05px] whitespace-nowrap">
        Add drill-through fields here
      </div>
    </div>
  );
}

function DataPane() {
  return (
    <div className="flex grow flex-col bg-[#f3f2f1]">
      <div className="flex h-[57px] items-start justify-between pr-[10px] pl-[10px]">
        <span className="mt-[13px] text-[19px] leading-6 font-semibold tracking-[-0.15px]">Data</span>
        <div className="mt-[16px]">
          <DoubleChevron />
        </div>
      </div>
      <div className="ml-[5px] flex h-[31px] w-[215px] items-center rounded-[4px] border border-[#d1d1d1] border-b-[#797775] bg-white pl-[15px]">
        <Magnifier size={18} color="#605e5c" />
        <span className="mt-[2px] ml-[8px] text-[16.500px] text-[#616161]">Search</span>
      </div>
      <div className="mt-[15px] flex h-[22px] items-center pl-[19px]">
        <Svg w={8} h={14}>
          <path d="M1 .8 7 7l-6 6.200" stroke="#424242" strokeWidth="1.300" />
        </Svg>
        <Svg w={16} h={16} className="ml-[9px]">
          <rect x=".8" y=".8" width="14.400" height="14.400" rx="3" stroke="#424242" strokeWidth="1.300" />
          <path d="M1 5.500h14M1 10.500h14M5.500 1v14M10.500 1v14" stroke="#424242" strokeWidth="1.200" />
        </Svg>
        <span className="ml-[7px] tracking-[-0.32px] text-[#424242]">random_sales_data</span>
      </div>
    </div>
  );
}

function PageTabs() {
  const tab = 'flex h-full items-center justify-center border-r border-[#d2d0ce] bg-white pt-[2px]';
  const widths = ['w-[95px]', 'w-[97px]', 'w-[95px]', 'w-[96px]', 'w-[95px]', 'w-[96px]', 'w-[95px]'];
  return (
    <div className="flex h-[44px] bg-[#f3f2f1]">
      <div className="flex w-[160px] items-start border-r border-[#8a8886] pl-[12px]">
        <div className="flex w-[30px] flex-col items-center pt-[9px]">
          <Svg w={24} h={18}>
            <path d="M.8.8h22.400v12.400H.8zM12 13v4M8 17h8" stroke="#605e5c" strokeWidth="1.500" />
          </Svg>
          <span className="mt-[8px] h-[3px] w-[30px] rounded-full bg-[#117865]" />
        </div>
        <Svg w={17} h={25} className="mt-[6px] ml-[32px]">
          <rect x=".8" y=".8" width="15.400" height="23.400" rx="1.500" stroke="#605e5c" strokeWidth="1.500" />
          <path d="M7.500 20.500h2" stroke="#605e5c" strokeWidth="1.500" />
        </Svg>
        <Svg w={6} h={10} className="mt-[16px] ml-[26px]">
          <path d="M6 0v10L0 5z" fill="#c8c6c4" />
        </Svg>
        <Svg w={6} h={10} className="mt-[16px] ml-[22px]">
          <path d="M0 0v10l6-5z" fill="#c8c6c4" />
        </Svg>
      </div>
      {widths.map((w, i) =>
        i === 1 ? (
          <div key={i} className={`relative border-b-5 border-b-[#117865] font-semibold ${tab} ${w}`}>
            <span className="pt-[5px]">Page 2</span>
            <span className="absolute top-[1px] right-[5px] text-[13.500px] leading-5">x</span>
          </div>
        ) : (
          <div key={i} className={`${tab} ${w}`}>
            Page {i + 1}
          </div>
        ),
      )}
      <div className="flex w-[49px] items-center justify-center bg-[#117865]">
        <Svg w={14} h={14} className="mb-[3px]">
          <path d="M7 0v14M0 7h14" stroke="#fff" strokeWidth="3.200" />
        </Svg>
      </div>
    </div>
  );
}

function StatusBar() {
  return (
    <div className="flex h-[29px] shrink-0 items-center border-t border-[#e1dfdd] bg-[#f3f2f1] pl-[5px] text-[#484644]">
      <span className="grow pt-[3px]">Page 2 of 7</span>
      <div className="flex items-center">
        <span className="h-[2px] w-[6px] bg-[#605e5c]" />
        <Svg w={126} h={14} className="ml-[6px]">
          <path d="M0 7.500h126M62.500 3.500v8" stroke="#605e5c" strokeWidth="1.200" />
          <path d="M41 1h5v13h-5z" fill="#605e5c" />
        </Svg>
        <Svg w={10} h={10} className="ml-[6px]">
          <path d="M5 0v10M0 5h10" stroke="#605e5c" strokeWidth="2" />
        </Svg>
        <span className="ml-[16px] w-[30px] text-[#605e5c]">73%</span>
        <Svg w={21} h={16} className="mt-[1px] mr-[22px] ml-[22px]">
          <path d="M.8.8h19.400v14.400H.8z" stroke="#797775" strokeWidth="1.500" />
          <path d="M4 6.500V4h3M14 4h3v2.500M17 9.500V12h-3M7 12H4V9.500" stroke="#605e5c" strokeWidth="1.300" />
        </Svg>
      </div>
    </div>
  );
}

/* ---------- taskbar ---------- */

const chrome = (
  <g>
    <circle cx="15" cy="15" r="15" fill="#fbbc05" />
    <path d="M15 0C9.500 0 4.800 2.900 2.100 7.300L9 19 15 15V8H28.300C25.700 3.300 20.700 0 15 0Z" fill="#e03c31" />
    <path d="M2.100 7.300C-2.500 15 1.500 28 14 30L21 18.500 9 18.500Z" fill="#1e9446" />
    <path d="M21 18.500 14.500 30C29 30 32 16 28.300 8H15Z" fill="#fcc31e" />
    <circle cx="15" cy="15" r="7.800" fill="#fff" />
    <circle cx="15" cy="15" r="6" fill="#3079ea" />
  </g>
);

const taskIcons: ReactNode[] = [
  <>
    <path d="M0 8h23v20H0z" fill="#2b2a29" />
    <path d="M8 0h22v19.500H8z" fill="#f2f2f2" fillOpacity=".95" />
    <path d="M8 8h15v11.500H8z" fill="#a9a9a9" />
  </>,
  <CopilotLogo key="c" size={30} />,
  <>
    <circle cx="15.500" cy="5" r="4.800" fill="#7b83eb" />
    <circle cx="24.500" cy="6.500" r="3.300" fill="#5059c9" />
    <path d="M20 11.500h10v8.500c0 4-4 6-8 4z" fill="#5059c9" />
    <path d="M9 11.500h15.500V20c0 5.500-4 8-8 8s-7.500-3-7.500-7z" fill="#7b83eb" />
    <path d="M0 7h13a2 2 0 0 1 2 2v13a1 1 0 0 1-1 1H0z" fill="#4650b8" />
    <path d="M4 11h7M7.500 11v8.500" stroke="#fff" strokeWidth="2" />
  </>,
  <>
    <defs>
      <linearGradient id="eg1" x1="2" y1="4" x2="30" y2="14" gradientUnits="userSpaceOnUse">
        <stop stopColor="#1c8fdc" />
        <stop offset=".55" stopColor="#2cc3d0" />
        <stop offset="1" stopColor="#66e05a" />
      </linearGradient>
      <linearGradient id="eg2" x1="0" y1="10" x2="14" y2="30" gradientUnits="userSpaceOnUse">
        <stop stopColor="#1b9de2" />
        <stop offset="1" stopColor="#0b5cb8" />
      </linearGradient>
    </defs>
    <path d="M0 14C1 5 8 0 15 0c9 0 15 6 15 12.500 0 5-4 7.500-8 7.500-3 0-5-1-4-3C19 14 17 10 12 10 6 10 1 13 0 18z" fill="url(#eg1)" />
    <path d="M0 15C2 9 8 7 12.500 7.500c4 .5 6.500 3.500 6 6.500-3-2-7 1-6.500 6 .5 6 6 9 12 8C19 31.500 10 31 5 26 1 22 0 19 0 15z" fill="url(#eg2)" />
    <path d="M12 17c-1 6 5 10 15.500 6.500C25 28 20 30.500 15 30 9 29 9 20 12 17z" fill="#114a8b" />
  </>,
  <>
    <path d="M8 6V3a1.500 1.500 0 0 1 1.500-1.500h10A1.500 1.500 0 0 1 21 3v3" stroke="#3fc0f0" strokeWidth="1.800" />
    <path d="M.5 5h29v22a3 3 0 0 1-3 3h-23a3 3 0 0 1-3-3z" fill="url(#storeG)" />
    <defs>
      <linearGradient id="storeG" x1="0" y1="5" x2="29" y2="30" gradientUnits="userSpaceOnUse">
        <stop stopColor="#0a68b4" />
        <stop offset="1" stopColor="#24375c" />
      </linearGradient>
    </defs>
    <path d="M9.500 12h5v5h-5z" fill="#f25022" />
    <path d="M15.500 12h5v5h-5z" fill="#7fba00" />
    <path d="M9.500 18h5v5h-5z" fill="#00a4ef" />
    <path d="M15.500 18h5v5h-5z" fill="#ffb900" />
  </>,
  <>
    <path d="M4 10 18 2l12 7v4L14 22z" fill="#1b8fe0" />
    <path d="M6 9 17 2.500 21 5 8 14z" fill="#37b6ee" />
    <path d="M30 10v16a2 2 0 0 1-2 2H9c-3 0-3-2-3-4z" fill="#45c8f2" />
    <path d="M30 8 10 21h6l14-7z" fill="#0b52a4" />
    <path d="M0 8h16v15H0z" fill="#0f63c0" />
    <ellipse cx="8" cy="15.500" rx="4" ry="4.700" stroke="#fff" strokeWidth="2.200" />
  </>,
  <>
    <path d="M0 0h30v30H0z" fill="#a30d1a" />
    <path d="M30 0v30H18C22 20 20 10 14 0z" fill="#b5101b" />
    <path d="M0 15h14c4 5 3 10 0 15H0z" fill="#7d0f38" />
    <path d="M0 13c6 1 9-2 13-2l-3-3 8 2 5-1 2 3 1 4-4-1-3 1 2 2-6 1c-5-3-10-1-15-1z" fill="#190f12" />
    <path d="M3 18c7 0 9 4 10 8M1 22c5 0 7 3 8 6" stroke="#3a0b1c" strokeWidth="1.400" />
  </>,
  <>
    <path d="M0 4a2 2 0 0 1 2-2h8l3 3h17v10H0z" fill="#e0a21a" />
    <path d="M0 8h10l3-2h17v22H0z" fill="#ffd050" />
    <path d="M5 28v-5a2 2 0 0 1 2-2h16a2 2 0 0 1 2 2v5z" fill="#1276cf" />
    <path d="M9 24.500h12" stroke="#0c4f96" strokeWidth="1.400" />
  </>,
  chrome,
  <>
    {chrome}
    <circle cx="26" cy="4.500" r="10" fill="#d9d6d0" stroke="#8f8b84" strokeWidth=".8" />
    <path d="M18 10c1-4 4-5 8-5s7 1 8 5c-3 6-13 6-16 0z" fill="#6f6656" />
    <circle cx="26" cy="1.500" r="3.200" fill="#a87452" />
    <path d="M22.500 0C22-6 30-6 29.500 0L28-1.500h-4z" fill="#1d1815" />
  </>,
];

function Taskbar() {
  return (
    <div className="flex h-[60px] shrink-0 items-center border-t border-[#b5aca5] bg-[linear-gradient(90deg,#f4dfd2_0%,#f5e5d3_10%,#f3dfd2_20%,#f5e2d4_42%,#f2dcd3_54%,#f5e3d5_70%,#f5e3d6_100%)] pl-[503px]">
      <Svg w={29} h={29}>
        <defs>
          <linearGradient id="winG" x1="0" y1="0" x2="29" y2="29" gradientUnits="userSpaceOnUse">
            <stop stopColor="#4cc8fa" />
            <stop offset=".6" stopColor="#0f8be0" />
            <stop offset="1" stopColor="#0470cc" />
          </linearGradient>
        </defs>
        <path d="M1 0h13v14H0V1zM15 0h13l1 1v13H15zM0 15h14v14H1l-1-1zM15 15h14v13l-1 1H15z" fill="url(#winG)" />
      </Svg>
      <div className="ml-[16px] flex h-[39px] w-[275px] items-center rounded-full border border-[#e6d6cb] border-b-[#c9bcb3] bg-[#fcf6f2] pl-[14px]">
        <Svg w={18} h={19}>
          <circle cx="7.800" cy="7.800" r="6.700" stroke="#252423" strokeWidth="1.900" />
          <path d="M12.500 12.500l5 5.500" stroke="#252423" strokeWidth="2.400" />
        </Svg>
        <span className="mt-[1px] ml-[12px] text-[16.500px] text-[#5c5855]">Search</span>
        <Svg w={52} h={28} className="mb-[2px] ml-auto mr-[9px] overflow-visible">
          <path d="M21 2v15c0 10-12 10-12 3" stroke="#f2477f" strokeWidth="2.800" />
          <path d="M20.500 0v5" stroke="#3b2a4f" strokeWidth="2.400" />
          <rect x="1" y="6" width="16" height="9.500" rx="4.700" fill="#3db0ea" stroke="#f2477f" strokeWidth="2" transform="rotate(-8 9 10)" />
          <path d="M8 17h6M10 14v6" stroke="#33294f" strokeWidth="1.600" />
          <path d="M34 0 45 3l6.500 7L35 27l-6-1z" fill="#1583ee" />
          <path d="M34 0l5 12-10 14z" fill="#0b62c9" />
          <path d="M45 3 34 20M51 10 35 22" stroke="#0a57b5" strokeWidth="1.200" />
          <path d="M30 20l6 4-2 3-5-1z" fill="#123a73" />
        </Svg>
      </div>
      <div className="ml-[3.500px] flex">
        {taskIcons.map((ic, i) => (
          <div key={i} className="relative flex h-[60px] w-[55px] items-center justify-center">
            <svg width="30" height="30" viewBox="0 0 30 30" fill="none" className="overflow-visible">
              {ic}
            </svg>
            {i === 9 && <span className="absolute bottom-[6px] left-[24px] h-[4px] w-[8px] rounded-full bg-[#8c837b]" />}
          </div>
        ))}
      </div>
      <div className="relative ml-[3px] flex h-[48px] w-[48px] items-center justify-center rounded-[5px] border border-[#efe2d9] bg-[#fbf2eb]">
        <Svg w={22} h={30}>
          <path d="M12 1a1 1 0 0 1 1-1h8a1 1 0 0 1 1 1v28a1 1 0 0 1-1 1h-9z" fill="url(#pbG)" />
          <path d="M6 8a1 1 0 0 1 1-1h8a1 1 0 0 1 1 1v22H6z" fill="#efc541" />
          <path d="M0 16a1 1 0 0 1 1-1h8a1 1 0 0 1 1 1v14H0z" fill="#f9e07a" />
          <defs>
            <linearGradient id="pbG" x1="12" y1="0" x2="22" y2="30" gradientUnits="userSpaceOnUse">
              <stop stopColor="#e9ae12" />
              <stop offset="1" stopColor="#c27c0c" />
            </linearGradient>
          </defs>
        </Svg>
        <span className="absolute bottom-[-1px] h-[4px] w-[20px] rounded-full bg-[#0b7ad1]" />
      </div>
      <Svg w={14} h={9} className="ml-[158px]">
        <path d="M1 8l6-6.500L13 8" stroke="#252423" strokeWidth="1.500" />
      </Svg>
      <Svg w={21} h={17} className="ml-[23px]">
        <path d="M5 14C-1 14 0 7 5 6.500 7-1 15 0 16 5c4 0 5 5 2 8z" fill="#b9b7b5" stroke="#3b3a39" strokeWidth="1.300" />
        <path d="M3 6C7-2 15 0 16 5c-4 0-6 0-8 3z" fill="#6b6967" />
        <circle cx="15" cy="12" r="5.500" fill="#fff" />
        <path d="M11.500 11.500c1-4 6-3.500 7-.5M18.500 12.500c-1 4-6 3.500-7 .5M18.500 8v3h-3M11.500 16v-3h3" stroke="#1a78d0" strokeWidth="1.200" />
      </Svg>
      <div className="ml-[21px] w-[32px] text-center leading-5 text-[#252423]">
        ENG
        <br />
        US
      </div>
      <Svg w={19} h={15} className="ml-[22px]">
        <path d="M1 5.500c5-5.500 12-5.500 17 0" stroke="#c8bab0" strokeWidth="1.500" />
        <path d="M3.500 8c4-4 8-4 12 0M6 10.500c2.500-2.500 4.500-2.500 7 0" stroke="#252423" strokeWidth="1.500" />
        <circle cx="9.500" cy="13" r="1.700" fill="#252423" />
      </Svg>
      <Svg w={21} h={16} className="ml-[10px]">
        <path d="M1 5.500h3L8.500 1.500v13L4 10.500H1z" stroke="#252423" strokeWidth="1.300" />
        <path d="M11 5.500c1 1.500 1 3.500 0 5M14 3.500c2.300 2.700 2.300 6.300 0 9M17 1.500c3.500 4 3.500 9 0 13" stroke="#252423" strokeWidth="1.300" />
      </Svg>
      <Svg w={20} h={13} className="ml-[9px]">
        <rect x=".8" y=".8" width="16" height="11.400" rx="3" stroke="#252423" strokeWidth="1.400" />
        <rect x="3" y="3" width="9.500" height="7" rx="1" fill="#252423" />
        <path d="M18.500 4.500v4" stroke="#252423" strokeWidth="2.200" />
      </Svg>
      <div className="mt-[-2px] mr-[25px] ml-auto text-right leading-5 tracking-[0.1px] text-[#252423]">
        <span className="tracking-[-0.35px]">17:49</span>
        <br />
        06-08-2025
      </div>
    </div>
  );
}

export default function App() {
  return (
    <div className="flex h-[1080px] w-[1920px] flex-col overflow-hidden bg-[#f3f2f1] font-['Open_Sans','Noto_Sans',sans-serif] text-[14.500px] tracking-[-0.2px] text-[#252423]">
      <TitleBar />
      <MenuBar />
      <Ribbon />
      <div className="flex h-[790px] shrink-0">
        <NavRail />
        <div className="flex w-[1417px] shrink-0 flex-col">
          <div className="flex h-[746px]">
            <Canvas />
            <Filters />
          </div>
          <PageTabs />
        </div>
        <Visualizations />
        <DataPane />
      </div>
      <StatusBar />
      <div className="h-[1px] w-[944px] shrink-0 bg-black" />
      <Taskbar />
    </div>
  );
}
